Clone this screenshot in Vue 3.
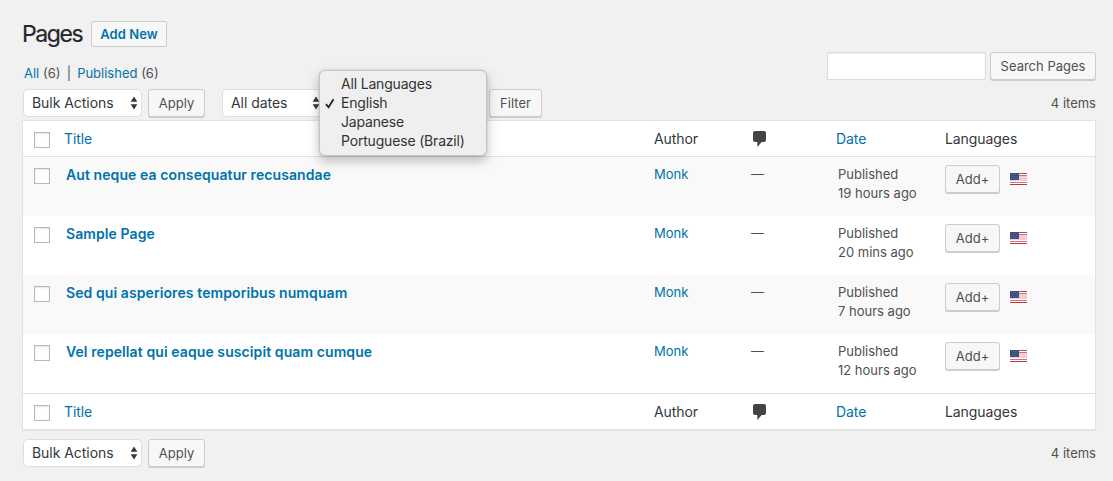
<script setup>
const languages = ['All Languages', 'English', 'Japanese', 'Portuguese (Brazil)']
const selected = 'English'
const rows = [
  { title: 'Aut neque ea consequatur recusandae', age: '19 hours ago' },
  { title: 'Sample Page', age: '20 mins ago' },
  { title: 'Sed qui asperiores temporibus numquam', age: '7 hours ago' },
  { title: 'Vel repellat qui eaque suscipit quam cumque', age: '12 hours ago' },
]
</script>

<template>
  <div class="page">
    <header class="top">
      <div class="heading">
        <h1>Pages</h1>
        <a class="add-new">Add New</a>
      </div>
      <div class="sub">
        <div class="views"><a>All</a> (6) <span class="bar">|</span> <a>Published</a> (6)</div>
        <div class="search">
          <input type="text" aria-label="Search" />
          <button class="btn">Search Pages</button>
        </div>
      </div>
    </header>

    <div class="nav">
      <div class="select">
        <span>Bulk Actions</span>
        <svg width="8" height="14" viewBox="0 0 8 14"><path d="M4 .6 7.300 5.700H.7zM4 13.400.7 8.300h6.600z" /></svg>
      </div>
      <button class="btn apply">Apply</button>
      <div class="select dates">
        <span>All dates</span>
        <svg width="8" height="14" viewBox="0 0 8 14"><path d="M4 .6 7.300 5.700H.7zM4 13.400.7 8.300h6.600z" /></svg>
      </div>
      <div class="lang">
        <ul class="menu">
          <li v-for="l in languages" :key="l">
            <svg v-if="l === selected" class="check" width="10" height="11" viewBox="0 0 10 11"><path d="M1 6.200 3.600 9.300 8.500 1.200" /></svg>
            <span>{{ l }}</span>
          </li>
        </ul>
      </div>
      <button class="btn filter">Filter</button>
      <span class="count">4 items</span>
    </div>

    <div class="table">
      <div v-for="part in ['head', 'foot']" :key="part" class="labels" :class="part">
        <span class="box"></span>
        <a class="c-title">Title</a>
        <span>Author</span>
        <span class="bubble">
          <svg width="14" height="16" viewBox="0 0 14 16"><path d="M2 0h9a2 2 0 0 1 2 2v7a2 2 0 0 1-2 2H8.700L4.300 16v-5H2a2 2 0 0 1-2-2V2a2 2 0 0 1 2-2z" /></svg>
        </span>
        <a>Date</a>
        <span>Languages</span>
      </div>
      <div class="rows">
        <div v-for="r in rows" :key="r.title" class="row">
          <span class="box"></span>
          <a class="title">{{ r.title }}</a>
          <a>Monk</a>
          <span class="dash">—</span>
          <span class="date">Published<br />{{ r.age }}</span>
          <span class="actions">
            <button class="btn add">Add+</button>
            <svg class="flag" width="17" height="12" viewBox="0 0 17 12">
              <rect width="17" height="12" fill="#f0cdd1" />
              <rect y="0" width="17" height="1" fill="#c04452" />
              <rect y="1" width="17" height="1" fill="#fff" />
              <rect y="2" width="17" height="1" fill="#d0717c" />
              <rect y="8" width="17" height="1" fill="#fff" />
              <rect y="9" width="17" height="1" fill="#d0717c" />
              <rect y="10" width="17" height="1" fill="#fff" />
              <rect y="11" width="17" height="1" fill="#c03545" />
              <rect width="9" height="7" fill="#3a4d7c" />
              <path d="M1 1.500h1m1 0h1m1 0h1m1 0h1M2 3.500h1m1 0h1m1 0h1M1 5.500h1m1 0h1m1 0h1m1 0h1" stroke="#576a94" />
            </svg>
          </span>
        </div>
      </div>
    </div>

    <div class="nav bottom">
      <div class="select">
        <span>Bulk Actions</span>
        <svg width="8" height="14" viewBox="0 0 8 14"><path d="M4 .6 7.300 5.700H.7zM4 13.400.7 8.300h6.600z" /></svg>
      </div>
      <button class="btn apply">Apply</button>
      <span class="count">4 items</span>
    </div>
  </div>
</template>

<style>
body { margin: 0; background: #f1f1f1; }
</style>

<style scoped>
* { box-sizing: border-box; }
.page {
  width: 1113px; height: 481px; padding: 0 17px 0 22px; overflow: hidden;
  background: #f1f1f1; color: #505050;
  font: 13px/19px Inter, "Liberation Sans", sans-serif;
}
a { color: #0073aa; }
.top { height: 89px; padding-top: 20px; }
.heading { display: flex; align-items: center; height: 28px; }
h1 { width: 69px; margin: 0; font-size: 23px; font-weight: 400; line-height: 28px; color: #23282d; letter-spacing: -1.4px; white-space: nowrap; -webkit-text-stroke: 0.2px #23282d; }
.add-new { width: 76px; height: 26px; border: 1px solid #ccc; border-radius: 2px; background: #f7f7f7; font-weight: 600; line-height: 25px; text-align: center; letter-spacing: .1px; }
.sub { display: flex; justify-content: space-between; height: 41px; }
.views { padding: 16px 0 0 2px; white-space: pre; }
.bar { margin: 0 2.500px; }
.search { display: flex; gap: 4px; padding-top: 4px; }
.search input { width: 159px; height: 28px; border: 1px solid #ddd; background: #fff; box-shadow: inset 0 1px 2px rgba(0,0,0,.07); padding: 0; }
.btn { height: 28px; padding: 0; border: 1px solid #ccc; border-radius: 3px; background: #f7f7f7; box-shadow: 0 1px 0 #ccc; color: #505050; font: 13px/26px Inter, "Liberation Sans", sans-serif; white-space: nowrap; flex: none; }
.search .btn { width: 106px; }
.nav { display: flex; height: 31px; }
.bottom { margin-top: 9px; }
.select { display: flex; align-items: center; justify-content: space-between; flex: none; width: 119px; height: 28px; margin-left: 1px; padding: 0 3px 0 8px; border: 1px solid #ddd; border-radius: 5px; background: #fff; color: #32373c; font-size: 14px; letter-spacing: -.05px; }
.select span { position: relative; top: -.5px; }
.select svg { fill: #32373c; }
.apply { width: 57px; margin-left: 6px; }
.dates { width: 101px; margin-left: 17px; border-right: 0; border-radius: 5px 0 0 5px; }
.lang { position: relative; width: 166px; }
.menu { position: absolute; z-index: 2; left: -4px; top: -19px; width: 168px; height: 86px; margin: 0; padding: 4px 0; list-style: none; border: 1px solid #c4c4c4; border-radius: 6px; background: #efefef; box-shadow: 0 5px 12px rgba(0,0,0,.25), 0 0 2px rgba(0,0,0,.15); color: #333; font-size: 14px; letter-spacing: -.18px; }
.menu li { position: relative; height: 19px; padding-left: 21px; line-height: 18px; white-space: nowrap; }
.check { position: absolute; left: 5px; top: 4px; fill: none; stroke: #222; stroke-width: 1.8; }
.filter { width: 53px; }
.count { margin-left: auto; line-height: 29px; }
.table { display: flex; flex-direction: column; height: 310px; border: 1px solid #e1e1e1; background: #fff; box-shadow: 0 1px 1px rgba(0,0,0,.04); }
.rows { order: 1; }
.foot { order: 2; }
.labels, .row { display: grid; grid-template-columns: 41px 590px 98px 84px 109px 150px; }
.labels { height: 36px; color: #32373c; font-size: 14px; line-height: 35px; letter-spacing: -.08px; }
.head { border-bottom: 1px solid #e1e1e1; }
.foot { border-top: 1px solid #e1e1e1; }
.box { width: 16px; height: 16px; margin: 11px 0 0 11px; border: 1px solid #b4b9be; background: #fff; box-shadow: inset 0 1px 2px rgba(0,0,0,.1); }
.bubble { padding: 10px 0 0 1px; line-height: 0; }
.bubble svg { fill: #444; }
.row { height: 59px; padding-top: 8px; }
.row:nth-child(odd) { background: #f9f9f9; }
.row .box { margin-top: 3px; }
.title { padding-left: 2px; font-size: 14px; font-weight: 600; letter-spacing: .09px; }
.dash { margin-left: -1px; }
.date { padding-left: 2px; }
.actions { display: flex; align-items: flex-start; gap: 10px; }
.add { width: 55px; }
.flag { margin-top: 8px; }
</style>
